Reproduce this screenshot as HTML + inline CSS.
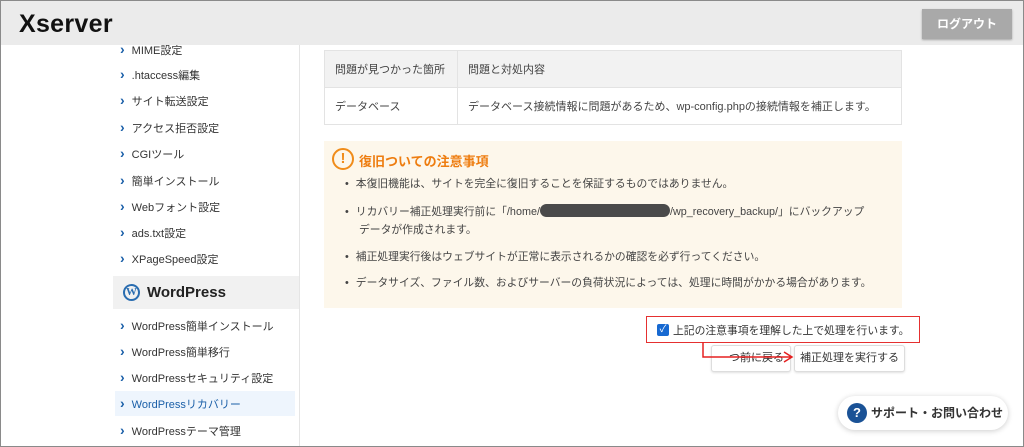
<!DOCTYPE html>
<html><head><meta charset="utf-8"><style>
*{margin:0;padding:0;box-sizing:border-box}
body{width:1024px;height:447px;overflow:hidden;background:#fff;font-family:"Liberation Sans","Noto Sans CJK JP",sans-serif;color:#333;position:relative}
.frame{position:absolute;left:0;top:0;width:1024px;height:447px;border:1px solid #8a8a8a;border-top:none;pointer-events:none;z-index:10}
.hdr{position:absolute;left:0;top:0;width:1024px;height:45px;background:#ebebeb;border-top:1px solid #8a8a8a}
.logo{position:absolute;left:19px;top:9px;font-size:25px;font-weight:bold;color:#111;letter-spacing:0.3px}
.logout{position:absolute;left:922px;top:8px;width:90px;height:30px;background:#a9a9a9;color:#fff;font-size:12px;font-weight:bold;text-align:center;line-height:30px;box-shadow:0 1px 2px rgba(0,0,0,.3)}
.side{position:absolute;left:113px;top:45px;width:187px;height:402px;border-right:1px solid #e5e5e5}
.it{position:absolute;left:7px;font-size:11px;color:#333;white-space:nowrap}
.it:before{content:"›";color:#1a5fa8;font-weight:bold;font-size:14px;margin-right:7px;position:relative}
.wp{position:absolute;left:0;top:231px;width:186px;height:33px;background:#f1f1f1;font-size:15px;font-weight:bold;color:#222;line-height:33px;padding-left:34px}
.wpi{position:absolute;left:10px;top:8px;width:17px;height:17px;border-radius:50%;border:2px solid #2a6db0;color:#2a6db0;font-size:11px;line-height:13px;text-align:center;font-family:"Liberation Serif",serif;font-weight:bold}
.act{position:absolute;left:2px;top:346px;width:180px;height:25px;background:#eef5fd}
table{position:absolute;left:324px;top:50px;width:578px;border-collapse:collapse;font-size:11px;color:#444}
td{border:1px solid #e3e3e3;height:37px;padding-left:10px}
tr:first-child td{background:#f2f2f2}
.note{position:absolute;left:324px;top:141px;width:578px;height:167px;background:#fdf7eb}
.ex{position:absolute;left:8px;top:7px;width:22px;height:22px;border-radius:50%;border:2px solid #f08c1a;color:#f08c1a;font-weight:bold;font-size:15px;text-align:center;line-height:18px}
.nt{position:absolute;left:35px;top:10px;color:#ee7d10;font-weight:bold;font-size:13px}
.li{position:absolute;left:21px;font-size:10.8px;color:#444;white-space:nowrap;line-height:18px}
.li:before{content:"•";margin-right:7px}
.li.nb:before{content:""}
.blk{display:inline-block;width:130px;height:13px;background:#4a4a4a;border-radius:7px;vertical-align:-2px}
.chk{position:absolute;left:646px;top:316px;width:274px;height:27px;border:1.5px solid #e53030}
.cb{position:absolute;left:10px;top:7px;width:12px;height:12px;background:#1769d1;border-radius:2px;color:#fff;font-size:10px;line-height:12px;text-align:center}
.ct{position:absolute;left:26px;top:5px;font-size:10.8px;color:#333;white-space:nowrap}
.btn{position:absolute;top:345px;height:27px;border:1px solid #ddd;border-radius:3px;background:#fff;font-size:11px;color:#333;text-align:center;line-height:25px;box-shadow:0 1px 2px rgba(0,0,0,.12)}
.sup{position:absolute;left:838px;top:396px;width:170px;height:34px;border-radius:17px;background:#fff;box-shadow:0 1px 6px rgba(0,0,0,.2);font-size:12px;font-weight:bold;color:#333;line-height:34px;padding-left:33px}
.q{position:absolute;left:9px;top:7px;width:20px;height:20px;border-radius:50%;background:#1a5296;color:#fff;text-align:center;line-height:20px;font-size:13px}
</style></head><body>
<div class="hdr"><div class="logo">Xserver</div><div class="logout">ログアウト</div></div>
<div class="side">
<div class="act"></div>
<div class="it" style="top:-4px">MIME設定</div>
<div class="it" style="top:21px">.htaccess編集</div>
<div class="it" style="top:47px">サイト転送設定</div>
<div class="it" style="top:74px">アクセス拒否設定</div>
<div class="it" style="top:100px">CGIツール</div>
<div class="it" style="top:127px">簡単インストール</div>
<div class="it" style="top:153px">Webフォント設定</div>
<div class="it" style="top:179px">ads.txt設定</div>
<div class="it" style="top:205px">XPageSpeed設定</div>
<div class="wp"><div class="wpi">W</div>WordPress</div>
<div class="it" style="top:272px">WordPress簡単インストール</div>
<div class="it" style="top:298px">WordPress簡単移行</div>
<div class="it" style="top:324px">WordPressセキュリティ設定</div>
<div class="it" style="top:350px;color:#1a5fa8">WordPressリカバリー</div>
<div class="it" style="top:377px">WordPressテーマ管理</div>
</div>
<table><tr><td style="width:133px">問題が見つかった箇所</td><td>問題と対処内容</td></tr>
<tr><td>データベース</td><td>データベース接続情報に問題があるため、wp-config.phpの接続情報を補正します。</td></tr></table>
<div class="note"><div class="ex">!</div><div class="nt">復旧ついての注意事項</div>
<div class="li" style="top:34px">本復旧機能は、サイトを完全に復旧することを保証するものではありません。</div>
<div class="li" style="top:62px">リカバリー補正処理実行前に「/home/<span class="blk"></span>/wp_recovery_backup/」にバックアップ</div>
<div class="li nb" style="top:80px;left:28px">データが作成されます。</div>
<div class="li" style="top:107px">補正処理実行後はウェブサイトが正常に表示されるかの確認を必ず行ってください。</div>
<div class="li" style="top:133px">データサイズ、ファイル数、およびサーバーの負荷状況によっては、処理に時間がかかる場合があります。</div>
</div>
<div class="chk"><div class="cb">✓</div><div class="ct">上記の注意事項を理解した上で処理を行います。</div></div>
<div class="btn" style="left:711px;width:80px">一つ前に戻る</div>
<div class="btn" style="left:794px;width:111px">補正処理を実行する</div>
<svg style="position:absolute;left:700px;top:341px" width="100" height="24"><path d="M3 1V16H92M84 11L92 16L84 21" fill="none" stroke="#e52020" stroke-width="1.5"/></svg>
<div class="sup"><div class="q">?</div>サポート・お問い合わせ</div>
<div class="frame"></div>
</body></html>
